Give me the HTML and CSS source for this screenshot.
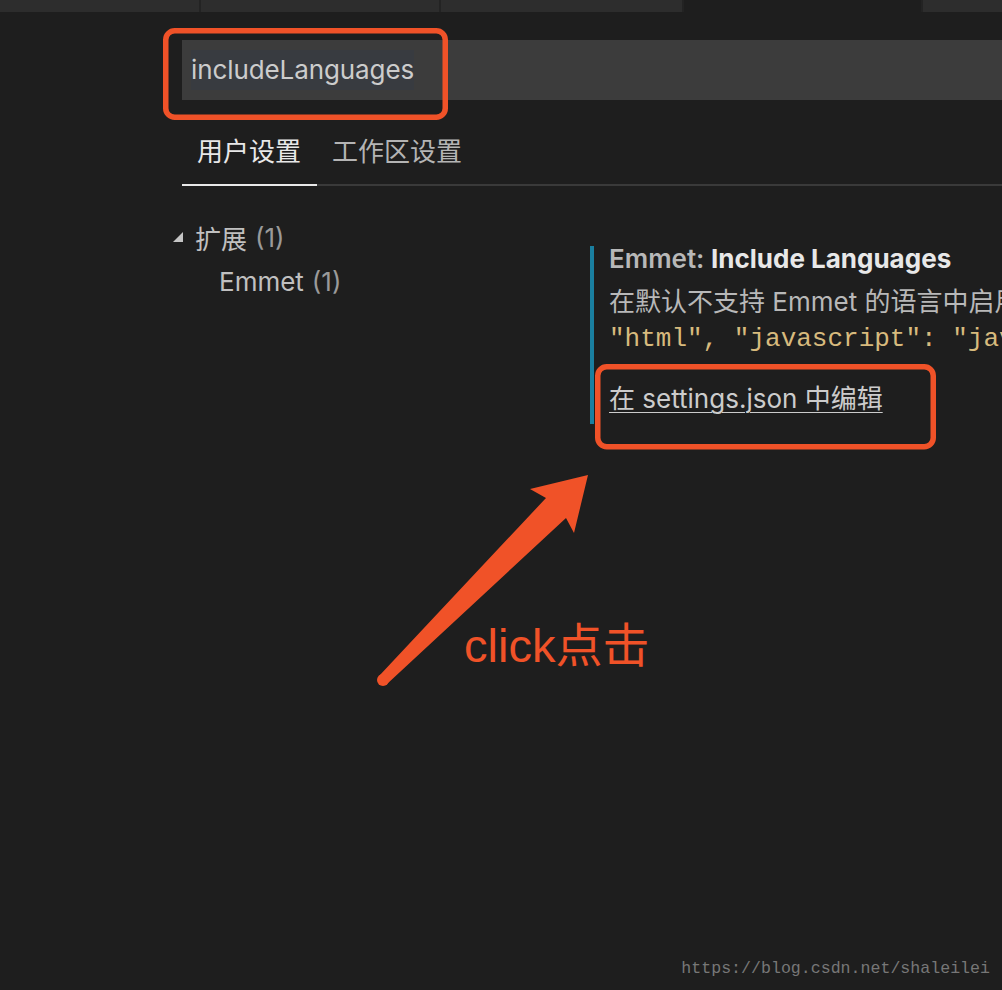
FILE: index.html
```html
<!DOCTYPE html>
<html lang="zh-CN">
<head>
<meta charset="utf-8">
<title>Settings</title>
<link rel="stylesheet" href="styles.css">
</head>
<body>
<div class="page">
  <div class="tabbar">
    <div class="etab t1"></div>
    <div class="etab t2"></div>
    <div class="etab t3"></div>
    <div class="etab t4 active"></div>
    <div class="etab t5"></div>
  </div>

  <div class="search"><span class="hl">includeLanguages</span></div>

  <div class="stabs">
    <div class="stab active">用户设置</div>
    <div class="stab">工作区设置</div>
  </div>

  <div class="main">
    <div class="tree">
      <div class="row">
        <svg class="twist" width="10" height="10" viewBox="0 0 10 10"><polygon points="10,0 10,10 0,10" fill="#c5c5c5"/></svg>
        <span class="label">扩展</span><span class="count">(1)</span>
      </div>
      <div class="row child"><span class="label">Emmet</span><span class="count">(1)</span></div>
    </div>
    <div class="detail">
      <div class="title"><span class="cat">Emmet: </span><span class="name">Include Languages</span></div>
      <div class="desc">在默认不支持 Emmet 的语言中启用 Emmet 缩写。在此添加该语言与受支持的语言间的映射。</div>
      <div class="code">"html", "javascript": "javascriptreact"}</div>
      <div class="linkrow"><a class="link">在 settings.json 中编辑</a></div>
    </div>
  </div>

  <svg class="annot" width="1002" height="990" viewBox="0 0 1002 990">
    <rect x="165.75" y="30.75" width="279.5" height="86.5" rx="9" fill="none" stroke="#f05228" stroke-width="5.5"/>
    <rect x="597.75" y="366.75" width="335.5" height="80" rx="9" fill="none" stroke="#f05228" stroke-width="5.5"/>
    <polygon points="379,676 546,498 530,489 588,475 574,533 566,518 387,684" fill="#f05228"/>
    <circle cx="383" cy="680" r="6" fill="#f05228"/>
  </svg>
  <div class="click">click点击</div>
  <div class="watermark">https://blog.csdn.net/shaleilei</div>
</div>
</body>
</html>
```

FILE: styles.css
```css
html, body {
  margin: 0;
  padding: 0;
  background: #1e1e1e;
  overflow: hidden;
}

.page {
  position: relative;
  width: 1002px;
  height: 990px;
  overflow: hidden;
  font-family: "Inter", "Noto Sans CJK SC", sans-serif;
  font-size: 26px;
  color: #cccccc;
}

/* editor tab strip */
.tabbar {
  display: flex;
  height: 12px;
}
.etab {
  background: #2d2d2d;
  border-right: 2px solid #232323;
  flex: none;
}
.t1 { width: 199px; }
.t2 { width: 238px; }
.t3 { width: 241px; }
.t4 { width: 237px; }
.t5 { flex: 1; border-right: none; }
.etab.active { background: #1e1e1e; }

/* search */
.search {
  margin: 28px 0 0 182px;
  height: 60px;
  background: #3c3c3c;
  display: flex;
  align-items: center;
  padding-left: 9px;
}
.hl {
  background: #383b40;
  line-height: 40px;
  height: 40px;
  color: #cccccc;
  white-space: nowrap;
  letter-spacing: -0.1px;
}

/* settings tabs */
.stabs {
  display: flex;
  margin: 20px 0 0 182px;
  border-bottom: 2px solid #3a3a3a;
}
.stab {
  padding: 0 16px 0 15px;
  height: 64px;
  line-height: 64px;
  color: #b4b4b4;
}
.stab.active {
  color: #e8e8e8;
  border-bottom: 2px solid #e8e8e8;
  margin-bottom: -2px;
}

/* main */
.main {
  display: grid;
  grid-template-columns: 417px 1fr;
  margin-left: 173px;
}
.tree {
  padding-top: 29px;
}
.row {
  display: flex;
  align-items: center;
  height: 44px;
  white-space: nowrap;
}
.twist {
  margin-right: 12px;
  flex: none;
}
.row.child {
  padding-left: 46px;
}
.label { color: #c0c0c0; margin-right: 8px; }
.count { color: #9a9a9a; }

.detail {
  margin-top: 60px;
  border-left: 4px solid #1a7fa0;
  padding: 0 0 11px 15px;
  min-width: 0;
  white-space: nowrap;
}
.title {
  line-height: 26px;
  font-weight: 600;
}
.cat { color: #b8b8b8; }
.name { color: #e8e8e8; font-weight: 700; }
.desc {
  margin-top: 16px;
  line-height: 28px;
  color: #b8b8b8;
  overflow: hidden;
}
.code {
  margin-top: 9px;
  line-height: 28px;
  font-family: "Liberation Mono", monospace;
  font-size: 26px;
  color: #d7ba7d;
  overflow: hidden;
}
.linkrow {
  margin-top: 32px;
  line-height: 28px;
}
.link {
  color: #cccccc;
  text-decoration: underline;
  text-underline-offset: 4px;
  text-decoration-thickness: 1px;
}

/* annotations */
.annot {
  position: absolute;
  left: 0;
  top: 0;
  pointer-events: none;
}
.click {
  position: absolute;
  left: 464px;
  top: 614px;
  font-family: "Liberation Sans", "Noto Sans CJK SC", sans-serif;
  font-size: 47px;
  line-height: 64px;
  color: #f05228;
  white-space: nowrap;
}
.watermark {
  position: absolute;
  right: 12px;
  top: 958px;
  font-family: "Liberation Mono", monospace;
  font-size: 16.6px;
  line-height: 22px;
  color: #777777;
  white-space: nowrap;
}
```
